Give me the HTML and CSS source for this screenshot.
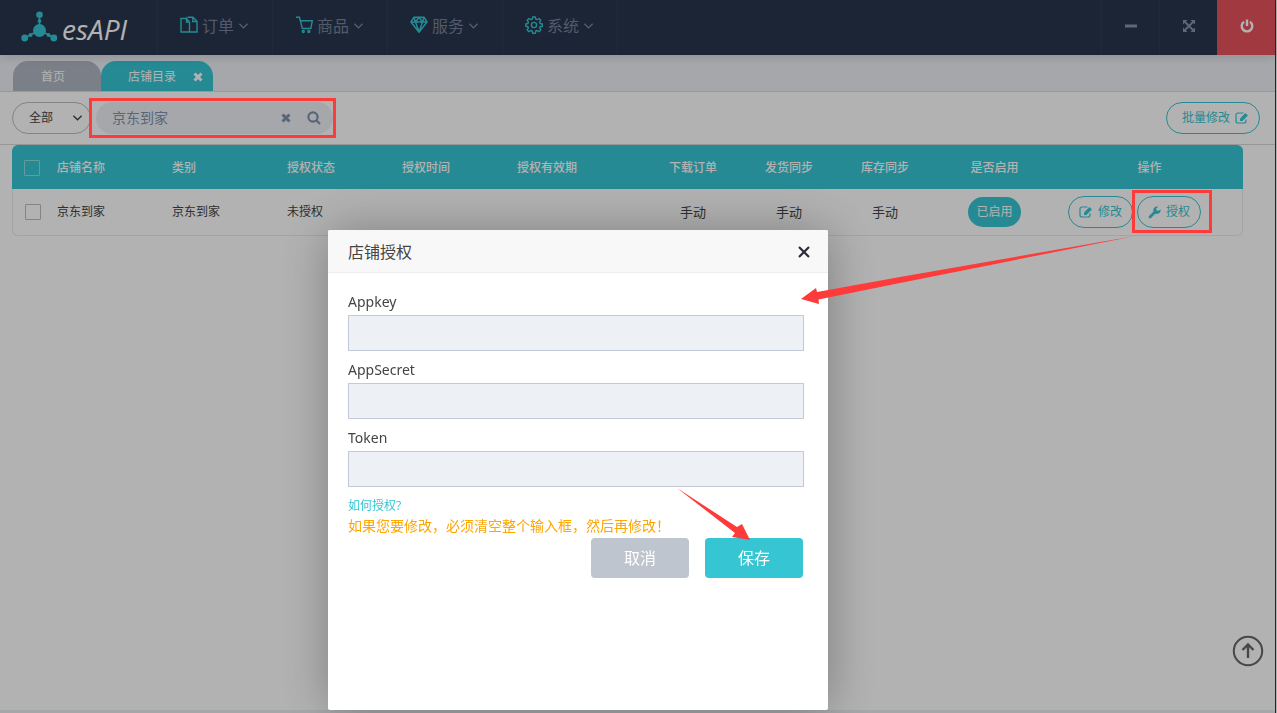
FILE: index.html
```html
<!DOCTYPE html>
<html lang="zh-CN">
<head>
<meta charset="utf-8">
<title>esAPI</title>
<link rel="stylesheet" href="styles.css">
</head>
<body>
<svg class="sprite" aria-hidden="true">
  <symbol id="chevron" viewBox="0 0 12 8"><path d="M1.500 1.500 6 6l4.500-4.500" fill="none" stroke="currentColor" stroke-width="1.500"/></symbol>
  <symbol id="cross" viewBox="0 0 10 10"><path d="M1.500 1.500l7 7M8.500 1.500l-7 7" fill="none" stroke="currentColor" stroke-width="3"/></symbol>
  <symbol id="edit" viewBox="0 0 14 12"><path d="M8.500 1H3a2 2 0 0 0-2 2v6a2 2 0 0 0 2 2h6a2 2 0 0 0 2-2V7.500" fill="none" stroke="currentColor" stroke-width="1.200"/><path d="M5 9V6.500L10.500 1l2.400 2.400L7.400 9z" fill="currentColor"/></symbol>
</svg>
<div class="app">
  <header class="topbar">
    <a class="brand" href="#">
      <svg width="37" height="32" viewBox="0 0 37 32" fill="#36c6d3" aria-hidden="true">
        <path d="M18.500 4v15L4 27M18.500 19 33 27" fill="none" stroke="#36c6d3" stroke-width="1.500"/>
        <circle cx="18.500" cy="19.500" r="6.500"/><circle cx="18.500" cy="3.800" r="3.300"/><circle cx="3.700" cy="27" r="3.400"/><circle cx="32.800" cy="27" r="3.400"/>
        <circle cx="18.500" cy="10" r="1.900"/><circle cx="9.500" cy="24" r="2"/><circle cx="27.500" cy="24" r="2"/>
      </svg>
      <span>esAPI</span>
    </a>
    <nav class="menu">
      <a href="#"><svg width="18" height="18" viewBox="0 0 18 18" fill="none" stroke="#36c6d3" stroke-width="1.400" aria-hidden="true"><path d="M6.500 2.500H1v13.500h8.500V6L6.500 2.500V6h3M7.500 1.200h5.500l4 4V16H9.500M12.800 1.200v4.300H17"/></svg><span>订单</span><svg class="caret"><use href="#chevron"/></svg></a>
      <a href="#"><svg width="18" height="18" viewBox="0 0 18 18" fill="none" stroke="#36c6d3" stroke-width="1.400" aria-hidden="true"><path d="M1 1.200h3.400L7.300 12.500h8.500L17.300 4.800H5.300"/><circle cx="8.300" cy="15.500" r="1"/><circle cx="13.800" cy="15.500" r="1"/></svg><span>商品</span><svg class="caret"><use href="#chevron"/></svg></a>
      <a href="#"><svg width="18" height="18" viewBox="0 0 18 18" fill="none" stroke="#36c6d3" stroke-width="1.500" stroke-linejoin="round" aria-hidden="true"><path d="M4 1.200h10L17 6 9 16.200 1 6zM1 6h16M4 1.200 5.500 6 9 1.200 12.500 6 14 1.200M5.500 6 9 16l3.500-10"/></svg><span>服务</span><svg class="caret"><use href="#chevron"/></svg></a>
      <a href="#"><svg width="18" height="18" viewBox="0 0 18 18" fill="none" stroke="#36c6d3" stroke-width="1.400" stroke-linejoin="round" aria-hidden="true"><path d="M7.700 1h2.600l.5 2.200 1.300.5 1.900-1.200 1.800 1.800-1.200 1.900.5 1.300 2.200.5v2.200l-2.200.5-.5 1.300 1.200 1.900-1.800 1.800-1.900-1.200-1.300.5-.5 2.200H7.700l-.5-2.200-1.300-.5L4 15.700l-1.800-1.800 1.200-1.900-.5-1.300L.8 10.200V8l2.100-.5.500-1.300-1.200-1.900L4 2.500l1.900 1.200 1.300-.5z"/><circle cx="9" cy="9" r="2.600"/></svg><span>系统</span><svg class="caret"><use href="#chevron"/></svg></a>
    </nav>
    <div class="window-tools">
      <button type="button" aria-label="最小化"><svg width="12" height="14" viewBox="0 0 12 14" aria-hidden="true"><path d="M0 5.500h12v3H0z" fill="currentColor"/></svg></button>
      <button type="button" aria-label="全屏"><svg width="14" height="14" viewBox="0 0 14 14" fill="currentColor" aria-hidden="true"><path d="M1 1h4.500L1 5.500zM13 1v4.500L8.500 1zM1 13V8.500L5.500 13zM13 13H8.500L13 8.500z"/><path d="M3 3l8 8M11 3l-8 8" stroke="currentColor" stroke-width="1.800"/></svg></button>
      <button type="button" class="power" aria-label="退出"><svg width="14" height="14" viewBox="0 0 14 14" fill="none" stroke="currentColor" stroke-width="2.400" aria-hidden="true"><path d="M4 2.700a5.300 5.300 0 1 0 6 0M7 .5V7"/></svg></button>
    </div>
  </header>

  <div class="tabs">
    <a class="tab" href="#">首页</a>
    <div class="tab active"><a href="#">店铺目录</a><button type="button" aria-label="关闭"><svg width="10" height="10"><use href="#cross"/></svg></button></div>
  </div>

  <form class="toolbar">
    <div class="filter">
      <select aria-label="类别"><option>全部</option></select>
      <svg class="caret"><use href="#chevron"/></svg>
    </div>
    <div class="search">
      <input type="text" value="京东到家" aria-label="搜索">
      <button type="button" aria-label="清除"><svg width="10" height="10"><use href="#cross"/></svg></button>
      <button type="button" class="find" aria-label="搜索"><svg width="14" height="14" viewBox="0 0 14 14" fill="none" stroke="currentColor" stroke-width="2.200" aria-hidden="true"><circle cx="6" cy="6" r="4.600"/><path d="M9.300 9.300 13 13"/></svg></button>
    </div>
    <button type="button" class="pill batch">批量修改<svg width="14" height="12"><use href="#edit"/></svg></button>
  </form>

  <main class="content">
    <table>
      <colgroup><col class="c-check"><col class="c-text"><col class="c-text"><col class="c-text"><col class="c-text"><col class="c-valid"><col class="c-sync"><col class="c-sync"><col class="c-sync"><col class="c-enable"><col class="c-action"></colgroup>
      <thead>
        <tr><th><input type="checkbox" aria-label="全选"></th><th>店铺名称</th><th>类别</th><th>授权状态</th><th>授权时间</th><th>授权有效期</th><th class="mid">下载订单</th><th class="mid">发货同步</th><th class="mid">库存同步</th><th class="mid">是否启用</th><th class="mid">操作</th></tr>
      </thead>
      <tbody>
        <tr><td><input type="checkbox" aria-label="选择京东到家"></td><td>京东到家</td><td>京东到家</td><td>未授权</td><td></td><td></td><td class="mid sync">手动</td><td class="mid sync">手动</td><td class="mid sync">手动</td><td class="mid"><button type="button" class="enabled">已启用</button></td>
        <td><div class="actions"><button type="button" class="pill"><svg width="14" height="12"><use href="#edit"/></svg>修改</button><button type="button" class="pill"><svg width="13" height="13" viewBox="0 0 13 13" aria-hidden="true"><path d="M2 11 7.500 5.500" stroke="currentColor" stroke-width="2.800" stroke-linecap="round"/><path d="M12.600 3.600A3.700 3.700 0 1 1 9.300.5l1 .2-2 1.600.2 2.100 2 .4z" fill="currentColor"/></svg>授权</button></div></td></tr>
      </tbody>
    </table>
  </main>
  <footer class="footer"></footer>
  <button type="button" class="to-top" aria-label="返回顶部"><svg width="32" height="32" viewBox="0 0 32 32" fill="none" stroke="currentColor" stroke-width="2" aria-hidden="true"><circle cx="16" cy="16" r="14.200"/><path d="M16 23V10M10.500 15 16 9.500l5.500 5.500" stroke-width="2.400"/></svg></button>
</div>

<div class="shade"></div>

<section class="dialog" role="dialog" aria-labelledby="dialog-title">
  <header class="dialog-head">
    <h2 id="dialog-title">店铺授权</h2>
    <button type="button" aria-label="关闭"><svg width="12" height="12" viewBox="0 0 12 12" fill="none" stroke="#2d2c3b" stroke-width="2.200" aria-hidden="true"><path d="M1 1l10 10M11 1 1 11"/></svg></button>
  </header>
  <form class="dialog-body">
    <label for="appkey">Appkey</label>
    <input type="text" id="appkey">
    <label for="appsecret">AppSecret</label>
    <input type="text" id="appsecret">
    <label for="token">Token</label>
    <input type="text" id="token">
    <a class="help" href="#">如何授权?</a>
    <p class="warn">如果您要修改，必须清空整个输入框，然后再修改！</p>
    <div class="buttons">
      <button type="button" class="cancel">取消</button>
      <button type="submit" class="save">保存</button>
    </div>
  </form>
</section>

<svg class="marks" width="1277" height="713" viewBox="0 0 1277 713" aria-hidden="true">
  <g fill="none" stroke="#fd3b3a" stroke-width="3"><path d="M90.500 99.500h244v37h-244zM1133.500 191.500h77v40h-77z"/></g>
  <g fill="#fd3b3a"><path d="M1135 236 900 277 817 292l-1-4L801 299l18 5-.5-4.500L900 283z"/><path d="M677 488l60 39 5-3 8 16-18-3 3-4z"/></g>
</svg>
</body>
</html>
```
FILE: styles.css
```css
* {
  box-sizing: border-box;
}

body {
  margin: 0;
  background: #fff;
  color: #444;
  font: 12px/20px "Open Sans", "Noto Sans CJK SC", sans-serif;
}

a {
  color: inherit;
  text-decoration: none;
}

button,
input,
select {
  margin: 0;
  padding: 0;
  border: 0;
  background: none;
  color: inherit;
  font: inherit;
}

svg {
  display: block;
  flex: none;
}

.sprite {
  position: absolute;
  width: 0;
  height: 0;
}

.caret {
  width: 11px;
  height: 8px;
}

.app {
  display: flex;
  flex-direction: column;
  min-height: 100vh;
  margin-right: 1px;
  border-right: 1px solid #28364d;
}

/* top bar */
.topbar {
  display: flex;
  height: 55px;
  background: #28364d;
  box-shadow: 0 1px 10px rgba(50, 50, 50, 0.2);
  z-index: 1;
}

.brand {
  display: flex;
  gap: 4px;
  width: 157px;
  padding: 11px 0 0 21px;
  color: #fff;
  font: italic 28px/36px "Open Sans", sans-serif;
}

.menu {
  display: flex;
  border-left: 1px solid #2e3d55;
}

.menu a {
  display: flex;
  align-items: center;
  gap: 4px;
  width: 115px;
  padding: 0 0 3px 22px;
  border-right: 1px solid #2e3d55;
  color: #76829a;
  font-size: 16px;
}

.menu a svg:first-child {
  margin-bottom: 2px;
}

.window-tools {
  display: flex;
  margin-left: auto;
}

.window-tools button {
  display: grid;
  place-items: center;
  width: 58px;
  padding-bottom: 3px;
  border-left: 1px solid #2e3d55;
  color: #8795ab;
}

.window-tools .power {
  border-color: #e7525e;
  background: #e7525e;
  color: #fff;
}

/* page tabs */
.tabs {
  display: flex;
  padding: 6px 12px 0 13px;
  border-bottom: 1px solid #dcdcdf;
  background: #eef0f5;
}

.tab {
  display: flex;
  align-items: center;
  gap: 17px;
  height: 30px;
  padding: 1px 36px 0 28px;
  border-radius: 15px 15px 0 0;
  background: #b0b8c3;
  color: #fff;
}

.tab.active {
  padding: 1px 10px 0 27px;
  background: #36c6d3;
}

/* filter bar */
.toolbar {
  display: flex;
  align-items: center;
  gap: 5px;
  height: 53px;
  padding: 0 15px 0 12px;
  border-bottom: 1px solid #d8d8d8;
}

.filter {
  display: grid;
  align-items: center;
  width: 79px;
}

.filter select,
.filter .caret {
  grid-area: 1 / 1;
}

.filter .caret {
  justify-self: end;
  margin-right: 8px;
  pointer-events: none;
}

.filter select {
  height: 32px;
  padding: 0 16px;
  border: 1px solid #bdbdbd;
  border-radius: 16px;
  appearance: none;
}

.search {
  display: flex;
  align-items: center;
  width: 237px;
  height: 32px;
  padding: 0 12px 0 16px;
  border-radius: 16px;
  background: #eef0f5;
  color: #7d92ad;
  font-size: 14px;
}

.search input {
  flex: 1;
  min-width: 0;
}

.search .find {
  margin-left: 16px;
}

.pill {
  display: flex;
  align-items: center;
  gap: 5px;
  height: 32px;
  padding: 0 10px;
  border: 1px solid #36c6d3;
  border-radius: 16px;
  background: #fff;
  color: #36c6d3;
}

.batch {
  margin-left: auto;
  padding: 0 10px 0 15px;
}

/* shop table */
.content {
  flex: 1;
  padding: 0 32px 0 12px;
}

table {
  width: 100%;
  border-spacing: 0;
  table-layout: fixed;
}

.c-check { width: 37px; }
.c-text { width: 115px; }
.c-valid { width: 136px; }
.c-sync { width: 96px; }
.c-enable { width: 123px; }
.c-action { width: 187px; }

th,
td {
  padding: 0 8px;
  text-align: left;
}

th {
  height: 44px;
  padding-top: 2px;
  background: #36c6d3;
  color: #fff;
  font-weight: 500;
}

td {
  height: 47px;
  border-bottom: 1px solid #e7ecf1;
}

th.mid,
td.mid {
  text-align: center;
}

.sync {
  font-size: 13px;
}

th:first-child {
  padding-left: 12px;
  border-top-left-radius: 6px;
}

th:last-child {
  border-top-right-radius: 6px;
}

td:first-child {
  padding-left: 12px;
  border-left: 1px solid #e7ecf1;
  border-bottom-left-radius: 6px;
}

td:last-child {
  border-right: 1px solid #e7ecf1;
  border-bottom-right-radius: 6px;
}

input[type="checkbox"] {
  display: block;
  width: 16px;
  height: 16px;
  border: 1px solid #bdbdbd;
  border-radius: 1px;
  appearance: none;
}

th input[type="checkbox"] {
  border-color: #8fdde4;
}

.enabled {
  height: 30px;
  padding: 0 8px;
  border-radius: 15px;
  background: #36c6d3;
  color: #fff;
}

.actions {
  display: flex;
  gap: 4px;
  padding-left: 4px;
}

.footer {
  height: 3px;
  background: #eef0f5;
}

.to-top {
  position: fixed;
  right: 13px;
  bottom: 46px;
  color: #666;
}

/* overlay and dialog */
.shade {
  position: fixed;
  inset: 0;
  z-index: 2;
  background: rgba(0, 0, 0, 0.3);
}

.dialog {
  position: fixed;
  top: 230px;
  left: 328px;
  z-index: 3;
  width: 500px;
  height: 480px;
  border-radius: 2px;
  background: #fff;
  box-shadow: 1px 1px 50px rgba(0, 0, 0, 0.3);
}

.dialog-head {
  display: flex;
  align-items: center;
  justify-content: space-between;
  height: 43px;
  padding: 2px 18px 0 20px;
  border-bottom: 1px solid #eee;
  border-radius: 2px 2px 0 0;
  background: #f8f8f8;
}

.dialog-head h2 {
  margin: 0;
  font-size: 16px;
  font-weight: 400;
}

.dialog-body {
  display: flex;
  flex-direction: column;
  padding: 19px 24px 0 20px;
}

.dialog-body label {
  margin-bottom: 3px;
  font-family: "Noto Sans", sans-serif;
  font-size: 14px;
}

.dialog-body input {
  height: 36px;
  margin-bottom: 9px;
  padding: 0 10px;
  border: 1px solid #c2cad8;
  background: #edf1f6;
}

.help {
  align-self: flex-start;
  color: #36c6d3;
}

.warn {
  margin: 0;
  color: #ffa500;
  font-size: 14px;
}

.buttons {
  display: flex;
  justify-content: flex-end;
  gap: 16px;
  padding: 2px 1px 0 0;
}

.buttons button {
  width: 98px;
  height: 40px;
  border-radius: 4px;
  color: #fff;
  font-size: 16px;
}

.buttons .cancel {
  background: #bfc5ce;
}

.buttons .save {
  background: #36c6d3;
}

/* call-out marks */
.marks {
  position: fixed;
  top: 0;
  left: 0;
  z-index: 4;
  pointer-events: none;
}
```
